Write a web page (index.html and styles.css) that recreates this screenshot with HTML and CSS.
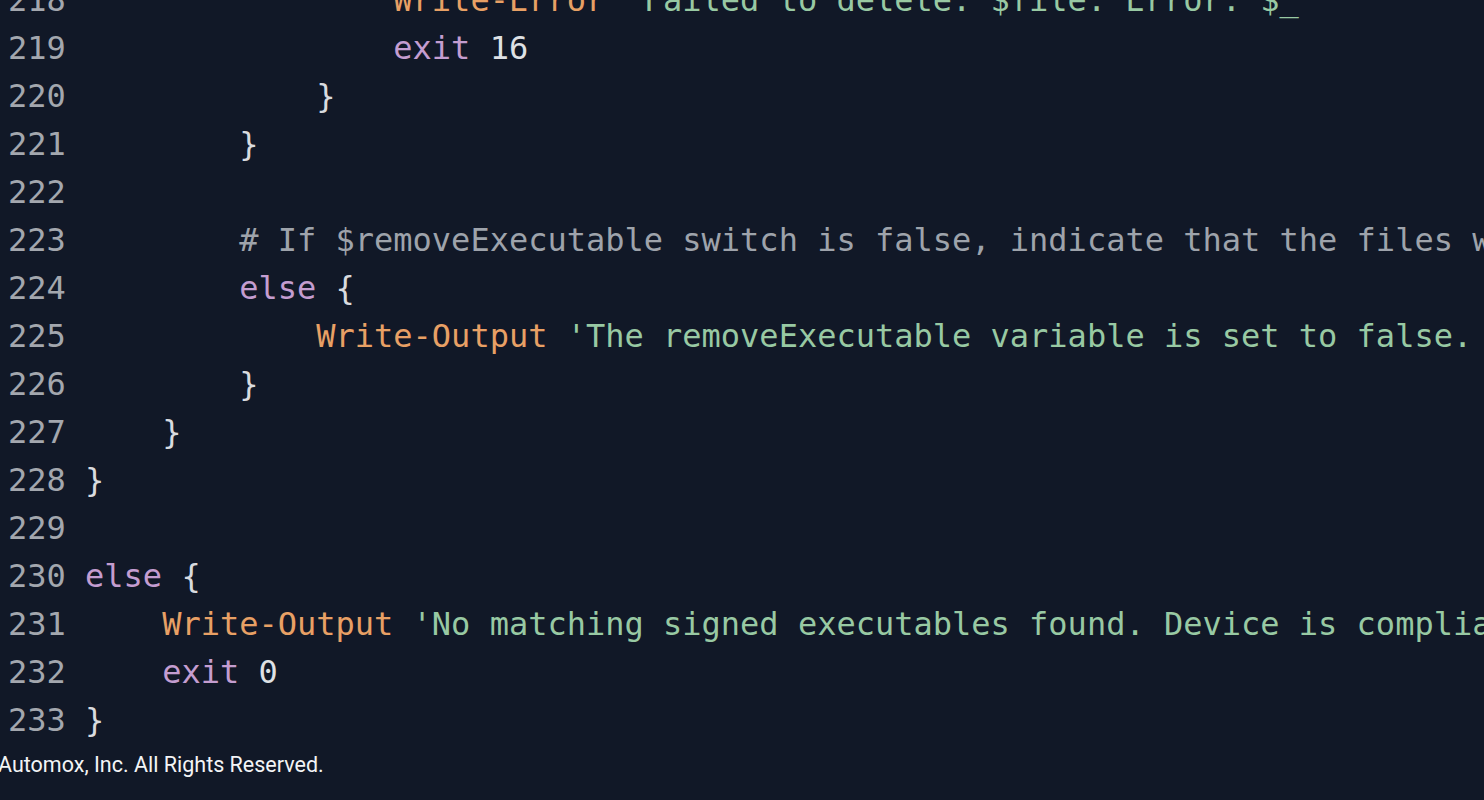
FILE: index.html
```html
<!DOCTYPE html>
<html lang="en">
<head>
<meta charset="utf-8">
<title>Script</title>
<link rel="stylesheet" href="styles.css">
</head>
<body>
<main class="page">
  <div class="code">
    <div class="line"><span class="ln">218</span><span class="src">                <span class="cmd">Write-Error</span> <span class="str">"Failed to delete: $file. Error: $_"</span></span></div>
    <div class="line"><span class="ln">219</span><span class="src">                <span class="kw">exit</span> <span class="num">16</span></span></div>
    <div class="line"><span class="ln">220</span><span class="src">            }</span></div>
    <div class="line"><span class="ln">221</span><span class="src">        }</span></div>
    <div class="line"><span class="ln">222</span><span class="src"></span></div>
    <div class="line"><span class="ln">223</span><span class="src">        <span class="cm"># If $removeExecutable switch is false, indicate that the files will not be removed</span></span></div>
    <div class="line"><span class="ln">224</span><span class="src">        <span class="kw">else</span> {</span></div>
    <div class="line"><span class="ln">225</span><span class="src">            <span class="cmd">Write-Output</span> <span class="str">'The removeExecutable variable is set to false. Files were not removed.'</span></span></div>
    <div class="line"><span class="ln">226</span><span class="src">        }</span></div>
    <div class="line"><span class="ln">227</span><span class="src">    }</span></div>
    <div class="line"><span class="ln">228</span><span class="src">}</span></div>
    <div class="line"><span class="ln">229</span><span class="src"></span></div>
    <div class="line"><span class="ln">230</span><span class="src"><span class="kw">else</span> {</span></div>
    <div class="line"><span class="ln">231</span><span class="src">    <span class="cmd">Write-Output</span> <span class="str">'No matching signed executables found. Device is compliant.'</span></span></div>
    <div class="line"><span class="ln">232</span><span class="src">    <span class="kw">exit</span> <span class="num">0</span></span></div>
    <div class="line"><span class="ln">233</span><span class="src">}</span></div>
  </div>
  <footer class="footer">Automox, Inc. All Rights Reserved.</footer>
</main>
</body>
</html>
```
FILE: styles.css
```css
html, body {
  margin: 0;
  padding: 0;
  background: #111827;
  overflow: hidden;
}
.page {
  width: 1484px;
  height: 800px;
  overflow: hidden;
  background: #111827;
}
.code {
  margin-top: -24px;
  padding-left: 8px;
  font-family: "DejaVu Sans Mono", monospace;
  font-size: 32px;
  line-height: 48px;
  color: #d9dbdf;
}
.line {
  display: flex;
  white-space: pre;
  height: 48px;
}
.ln {
  flex: none;
  width: 3ch;
  margin-right: 1ch;
  color: #a3a7ae;
}
.src {
  flex: none;
}
.kw { color: #c49dd0; }
.cmd { color: #e8a065; }
.str { color: #98c9a3; }
.cm { color: #9ea3ab; }
.num { color: #dfe1e5; }
.footer {
  padding-top: 7px;
  margin-left: -2px;
  font-family: Roboto, "Liberation Sans", sans-serif;
  font-size: 21.5px;
  line-height: 28px;
  color: #f3f4f6;
}
```
